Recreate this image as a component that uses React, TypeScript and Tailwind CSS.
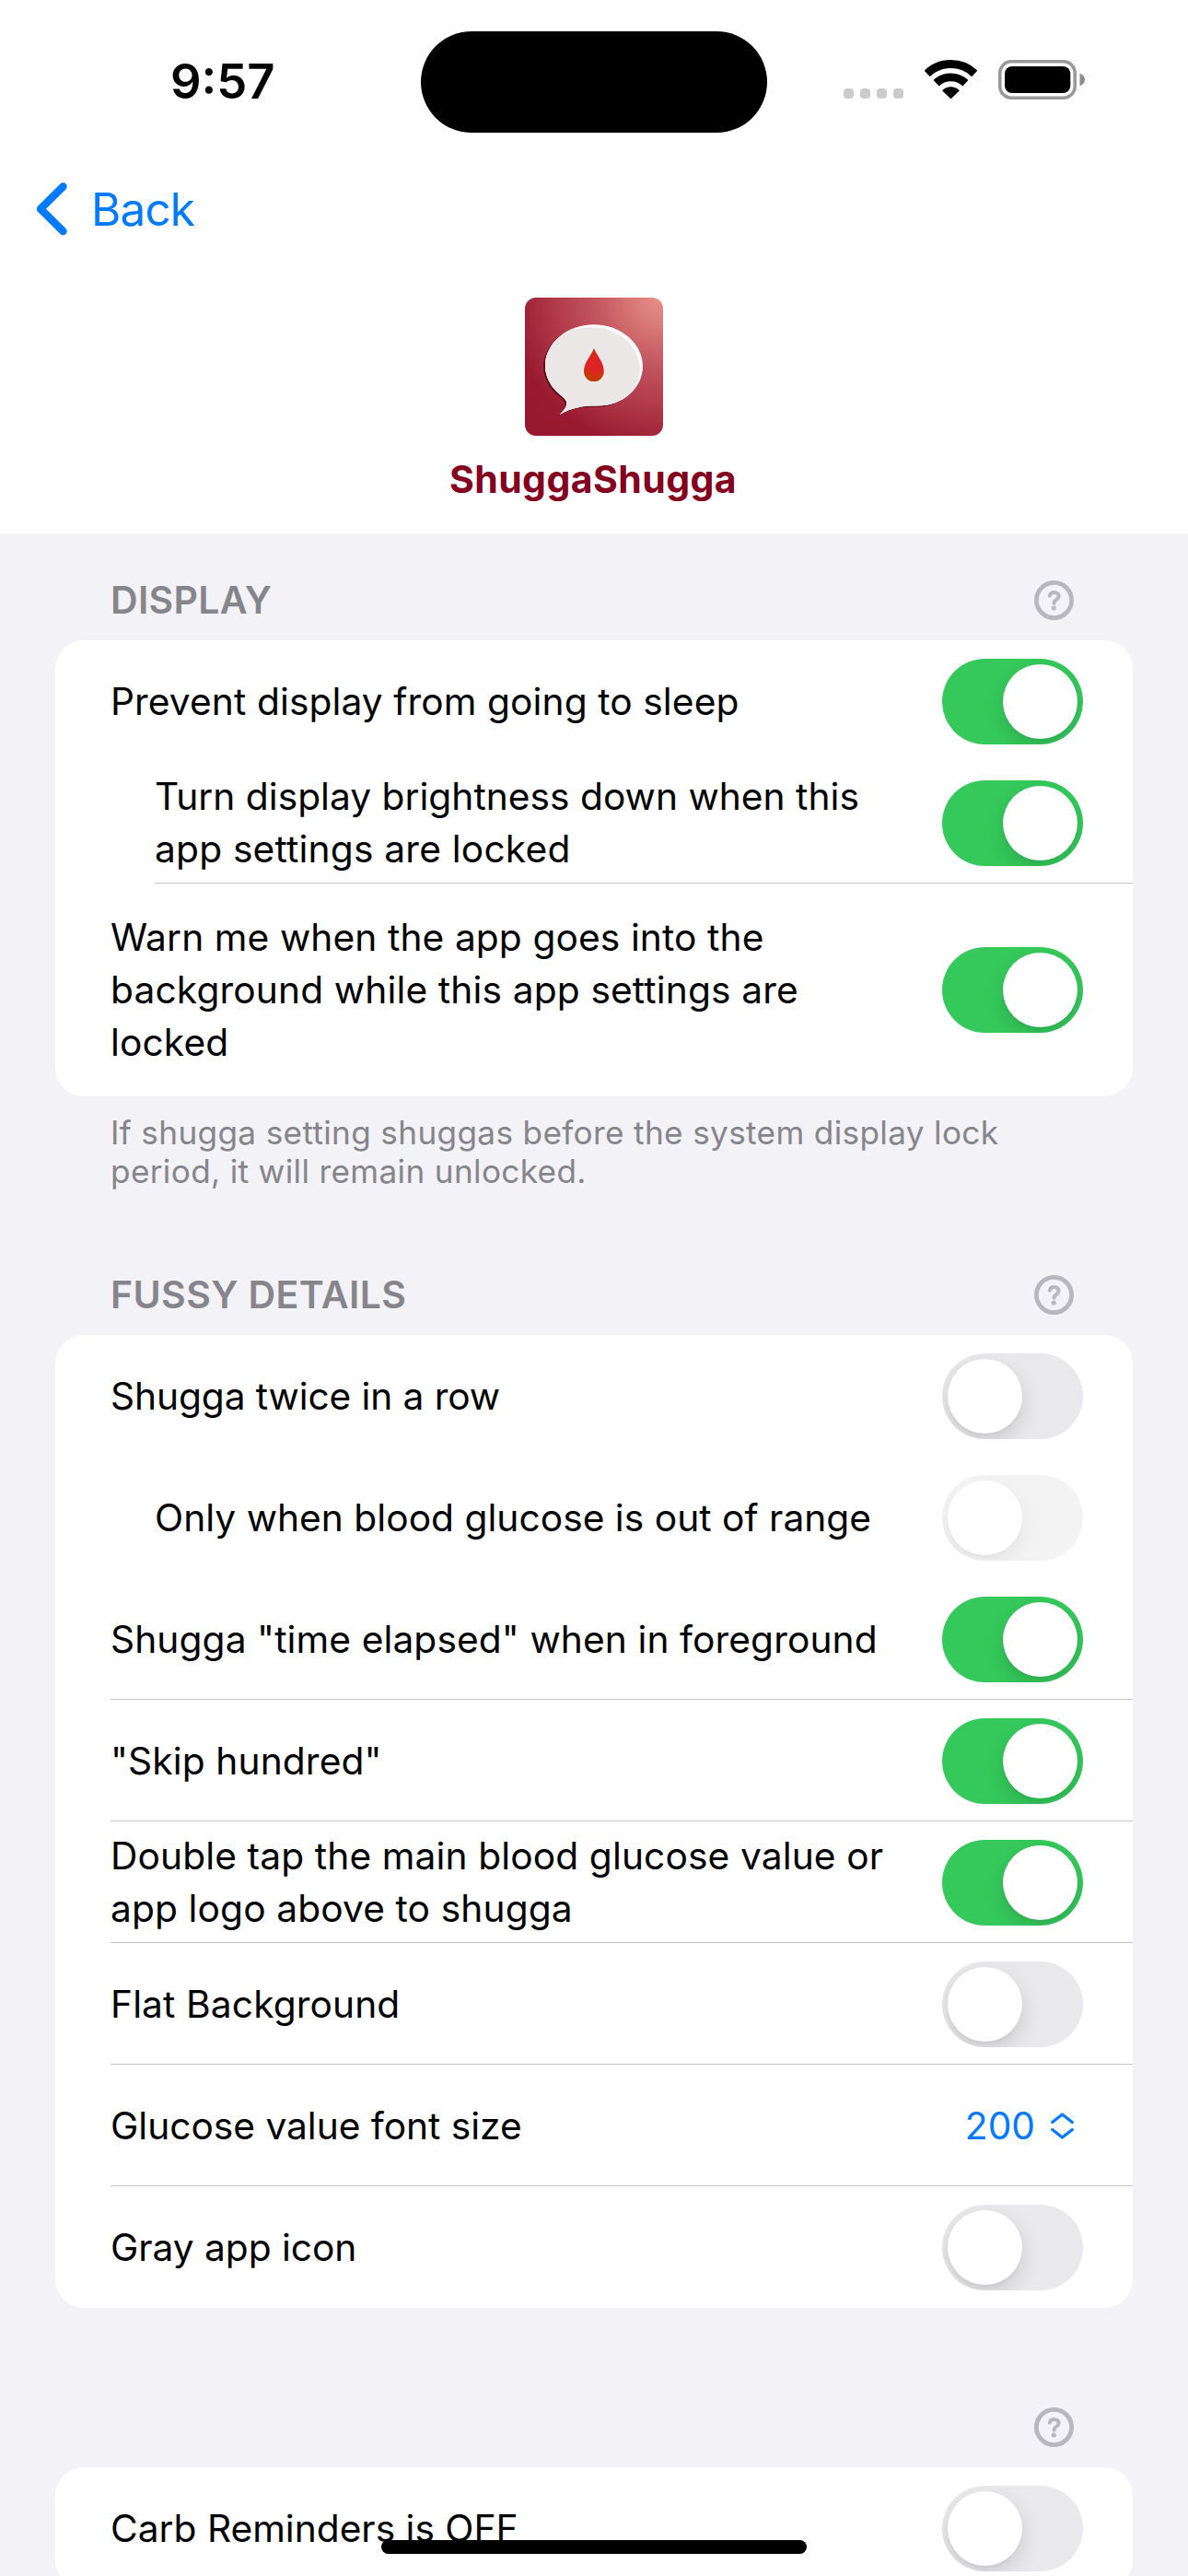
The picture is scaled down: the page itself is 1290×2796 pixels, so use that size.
import type { ReactNode } from 'react';

type Line = { text: string; tracking?: string };
type RowData = {
  lines: Line[];
  control: 'on' | 'off' | 'disabled' | 'picker';
  indent?: boolean;
  divider?: boolean;
  tall?: boolean;
};

const displayRows: RowData[] = [
  { lines: [{ text: 'Prevent display from going to sleep', tracking: 'tracking-[0.1px]' }], control: 'on' },
  {
    lines: [
      { text: 'Turn display brightness down when this', tracking: 'tracking-[0.02px]' },
      { text: 'app settings are locked', tracking: 'tracking-[0.2px]' },
    ],
    control: 'on',
    indent: true,
    divider: true,
  },
  {
    lines: [
      { text: 'Warn me when the app goes into the', tracking: 'tracking-[0.1px]' },
      { text: 'background while this app settings are', tracking: 'tracking-[0.14px]' },
      { text: 'locked' },
    ],
    control: 'on',
    tall: true,
  },
];

const fussyRows: RowData[] = [
  { lines: [{ text: 'Shugga twice in a row', tracking: 'tracking-[-0.1px]' }], control: 'off' },
  {
    lines: [{ text: 'Only when blood glucose is out of range', tracking: 'tracking-[0.03px]' }],
    control: 'disabled',
    indent: true,
  },
  { lines: [{ text: 'Shugga "time elapsed" when in foreground', tracking: 'tracking-[0.1px]' }], control: 'on', divider: true },
  { lines: [{ text: '"Skip hundred"' }], control: 'on', divider: true },
  {
    lines: [{ text: 'Double tap the main blood glucose value or' }, { text: 'app logo above to shugga' }],
    control: 'on',
    divider: true,
  },
  { lines: [{ text: 'Flat Background' }], control: 'off', divider: true },
  { lines: [{ text: 'Glucose value font size', tracking: 'tracking-[-0.02px]' }], control: 'picker', divider: true },
  { lines: [{ text: 'Gray app icon', tracking: 'tracking-[-0.04px]' }], control: 'off' },
];

const carbRows: RowData[] = [
  { lines: [{ text: 'Carb Reminders is OFF', tracking: 'tracking-[0px]' }], control: 'off' },
];

function Toggle({ state }: { state: 'on' | 'off' | 'disabled' }) {
  const on = state === 'on';
  return (
    <div
      role="switch"
      aria-checked={on}
      className={`flex h-[93px] w-[153px] shrink-0 items-center overflow-hidden rounded-full px-[6px] ${
        on ? 'justify-end bg-[#35c95b]' : 'justify-start bg-[#e9e9eb]'
      } ${state === 'disabled' ? 'opacity-50' : ''}`}
    >
      <div className="size-[81px] rounded-full bg-white shadow-[0_9px_22px_rgba(0,0,0,0.13),0_3px_3px_rgba(0,0,0,0.03)]" />
    </div>
  );
}

function Picker() {
  return (
    <div className="mr-[10px] flex items-center gap-[17px] pt-px text-[#007aff]">
      <span>200</span>
      <svg width="25" height="29" viewBox="0 0 25 29" fill="none" stroke="currentColor" strokeWidth="3.2" strokeLinecap="round" strokeLinejoin="round">
        <path d="M1.7 10.4 12.5 2 23.3 10.4M1.7 18.6 12.5 27 23.3 18.6" />
      </svg>
    </div>
  );
}

function HelpIcon() {
  return (
    <svg width="43" height="43" viewBox="0 0 43 43" fill="none" stroke="#b8b7bd" className="shrink-0">
      <circle cx="21.5" cy="21.5" r="19.1" strokeWidth="4.8" />
      <path d="M16.8 16.6C17.4 14 19.2 12.9 21.7 12.9c2.9 0 4.9 1.6 4.9 4.1 0 2-1.2 3-2.8 4.1-1.6 1-2.2 1.8-2.2 3.6" strokeWidth="4" strokeLinecap="round" strokeLinejoin="round" />
      <circle cx="21.3" cy="30" r="2.6" fill="#b8b7bd" stroke="none" />
    </svg>
  );
}

function SectionHeader({ title, tracking = '' }: { title?: string; tracking?: string }) {
  return (
    <div className="flex h-[43px] items-center justify-between pr-[124px] pl-[120px]">
      <h2 className={`text-[41px] leading-[43px] font-semibold text-[#86858b] ${tracking}`}>{title}</h2>
      <HelpIcon />
    </div>
  );
}

function Row({ lines, control, indent, divider, tall }: RowData) {
  return (
    <div className={indent ? 'pl-[108px]' : 'pl-[60px]'}>
      <div
        className={`flex items-center justify-between pr-[54px] ${tall ? 'h-[231px]' : 'h-[132px] [&>[role=switch]]:mt-px'} ${
          divider ? 'shadow-[inset_0_-1px_0_#c6c6c8]' : ''
        }`}
      >
        <div className="leading-[57px] whitespace-nowrap">
          {lines.map((l) => (
            <div key={l.text} className={l.tracking ?? 'tracking-[0.12px]'}>
              {l.text}
            </div>
          ))}
        </div>
        {control === 'picker' ? <Picker /> : <Toggle state={control} />}
      </div>
    </div>
  );
}

function Card({ children }: { children: ReactNode }) {
  return <div className="mx-[60px] mt-[22px] rounded-[31px] bg-white text-[40.7px] text-black">{children}</div>;
}

function StatusBar() {
  return (
    <div className="flex h-[144px] items-start pt-[33px]">
      <div className="flex h-[111px] w-[457px] items-center pl-[185px] text-[52.5px] leading-none font-semibold text-black">9:57</div>
      <div className="mt-[0.5px] h-[110.5px] w-[376px] rounded-full bg-black" />
      <div className="flex items-start pt-[32px] pl-[83px]">
        <div className="mt-[31px] flex gap-[7px]">
          {[0, 1, 2, 3].map((i) => (
            <div key={i} className="size-[11px] rounded-[4px] bg-[#cbcbcb]" />
          ))}
        </div>
        <svg width="57" height="43" viewBox="0 0 57 43" className="ml-[23px]" fill="none" stroke="#000">
          <path d="M2.7 14.9A37.4 37.4 0 0 1 54.3 14.9" strokeWidth="9" />
          <path d="M12.6 25.2A23.1 23.1 0 0 1 44.4 25.2" strokeWidth="8.8" />
          <path d="M28.5 41.5 20 33.2A12.3 12.3 0 0 1 37 33.2Z" fill="#000" strokeWidth="1.2" strokeLinejoin="round" />
        </svg>
        <svg width="94" height="43" viewBox="0 0 94 43" className="ml-[23px]">
          <rect x="1.8" y="1.8" width="81.4" height="39.4" rx="12.5" fill="none" stroke="#999" strokeWidth="3.6" />
          <rect x="7" y="7" width="71.3" height="29" rx="8" />
          <path d="M88.5 14.5C92.2 16.2 94 18.6 94 21.5s-1.8 5.3-5.5 7Z" fill="#8c8c8c" />
        </svg>
      </div>
    </div>
  );
}

const bubble =
  'M37.5 127C42.5 122.5 45.3 118.5 45.3 114.5 45.3 111.5 42 108.5 38 105.3 28 97 22 86 22 74 22 49 46 29.3 75 29.3S128 50 128 74 107 117.6 78 117.6C64 117.6 52 119 37.5 127Z';

function AppLogo() {
  return (
    <svg width="150" height="150" viewBox="0 0 150 150" className="rounded-[12px]">
      <defs>
        <radialGradient id="logo-bg" gradientUnits="userSpaceOnUse" cx="150" cy="0" r="212">
          <stop offset="0" stopColor="#e79088" />
          <stop offset="0.12" stopColor="#dd7f7c" />
          <stop offset="0.35" stopColor="#c2555e" />
          <stop offset="0.55" stopColor="#b13b4a" />
          <stop offset="0.78" stopColor="#991a2f" />
          <stop offset="1" stopColor="#97172b" />
        </radialGradient>
        <radialGradient id="logo-drop" gradientUnits="userSpaceOnUse" cx="76.5" cy="72" r="18">
          <stop offset="0" stopColor="#df2428" />
          <stop offset="0.5" stopColor="#da2620" />
          <stop offset="0.85" stopColor="#c63a06" />
          <stop offset="1" stopColor="#b93e04" />
        </radialGradient>
        <clipPath id="logo-bubble">
          <path d={bubble} />
        </clipPath>
      </defs>
      <rect width="150" height="150" fill="url(#logo-bg)" />
      <path d={bubble} fill="#5c0c1c" transform="translate(-1.8 1.2)" />
      <path d={bubble} fill="#fffafa" />
      <g clipPath="url(#logo-bubble)">
        <path d={bubble} fill="#ebe7e7" transform="translate(-3.2 3)" />
        <path d="M20 60H60V130H20Z" fill="#ebe7e7" />
      </g>
      <path d="M75 55C78.5 64 85.8 70 85.8 80.2A10.9 10.9 0 0 1 64 80.2C64 70 71.5 64 75 55Z" fill="url(#logo-drop)" />
    </svg>
  );
}

export default function App() {
  return (
    <div className="relative h-[2796px] w-[1290px] overflow-hidden bg-[#f2f2f7] font-['Inter',sans-serif]">
      <header className="flex h-[579px] flex-col bg-white">
        <StatusBar />
        <nav className="mt-[33px] flex h-[100px] items-center gap-[26px] pl-[39px] text-[#007aff]">
          <svg width="34" height="58" viewBox="0 0 34 58" fill="none" stroke="currentColor" strokeWidth="8.4" strokeLinecap="round" strokeLinejoin="round">
            <path d="M29.5 4.5 5 28.7 29.5 53" />
          </svg>
          <span className="pt-[2px] text-[49.5px] leading-none tracking-[-0.9px]">Back</span>
        </nav>
        <div className="mt-[46px] flex flex-col items-center">
          <AppLogo />
          <h1 className="mt-[22px] mr-[2px] text-[41px] leading-[50px] font-bold tracking-[0.42px] text-[#84001f]">ShuggaShugga</h1>
        </div>
      </header>

      <section className="pt-[51px]">
        <SectionHeader title="DISPLAY" tracking="tracking-[0.3px]" />
        <Card>
          {displayRows.map((r) => (
            <Row key={r.lines[0].text} {...r} />
          ))}
        </Card>
        <p className="mt-[18px] pl-[120px] text-[35.2px] leading-[42px] tracking-[0.33px] text-[#86858b]">
          If shugga setting shuggas before the system display lock
          <br />
          period, it will remain unlocked.
        </p>
      </section>

      <section className="pt-[92px]">
        <SectionHeader title="FUSSY DETAILS" tracking="tracking-[0.4px]" />
        <Card>
          {fussyRows.map((r) => (
            <Row key={r.lines[0].text} {...r} />
          ))}
        </Card>
      </section>

      <section className="pt-[108px]">
        <SectionHeader />
        <Card>
          {carbRows.map((r) => (
            <Row key={r.lines[0].text} {...r} />
          ))}
        </Card>
      </section>

      <div className="absolute bottom-[24px] left-[414px] h-[15px] w-[462px] rounded-full bg-black" />
    </div>
  );
}
